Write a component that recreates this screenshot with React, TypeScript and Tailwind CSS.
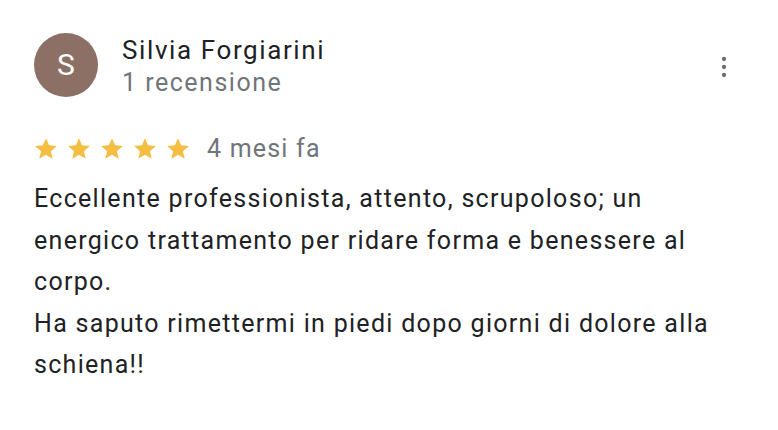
import React from "react";

function Star() {
  return (
    <svg viewBox="0 0 24 24" className="w-[26px] h-[26px]" fill="#f5bd41">
      <path d="M12 17.27L18.18 21l-1.64-7.03L22 9.24l-7.19-.61L12 2 9.19 8.63 2 9.24l5.46 4.73L5.82 21z" />
    </svg>
  );
}

export default function App() {
  return (
    <main className="w-[778px] h-[430px] bg-white font-['Roboto',sans-serif] overflow-hidden">
      <div className="pl-[34px] pr-[32px] pt-[33px]">
        {/* header */}
        <div className="flex items-start">
          <div className="w-[64px] h-[64px] rounded-full bg-[#8c6f65] flex items-center justify-center shrink-0">
            <span className="text-white text-[30px] leading-none">S</span>
          </div>
          <div className="ml-[24px] flex-1">
            <div className="text-[26px] leading-[34px] tracking-[1.6px] text-[#202124]">
              Silvia Forgiarini
            </div>
            <div className="text-[25px] leading-[32px] tracking-[1.5px] text-[#70757a]">
              1 recensione
            </div>
          </div>
          <div className="pt-[18px] pr-[6px]">
            <svg viewBox="0 0 24 24" className="w-[32px] h-[32px]" fill="#6e6e6e">
              <circle cx="12" cy="6" r="1.6" />
              <circle cx="12" cy="12" r="1.6" />
              <circle cx="12" cy="18" r="1.6" />
            </svg>
          </div>
        </div>

        {/* rating */}
        <div className="flex items-center mt-[34px] -ml-[1px]">
          <div className="flex gap-[7px]">
            <Star />
            <Star />
            <Star />
            <Star />
            <Star />
          </div>
          <span className="ml-[16px] text-[25px] leading-[32px] tracking-[1.2px] text-[#70757a]">
            4 mesi fa
          </span>
        </div>

        {/* body */}
        <p className="mt-[13px] w-[712px] text-[25px] leading-[41.5px] tracking-[1.3px] text-[#202124]">
          Eccellente professionista, attento, scrupoloso; un energico trattamento per ridare forma e benessere al corpo.
          <br />
          Ha saputo rimettermi in piedi dopo giorni di dolore alla schiena!!
        </p>
      </div>
    </main>
  );
}
